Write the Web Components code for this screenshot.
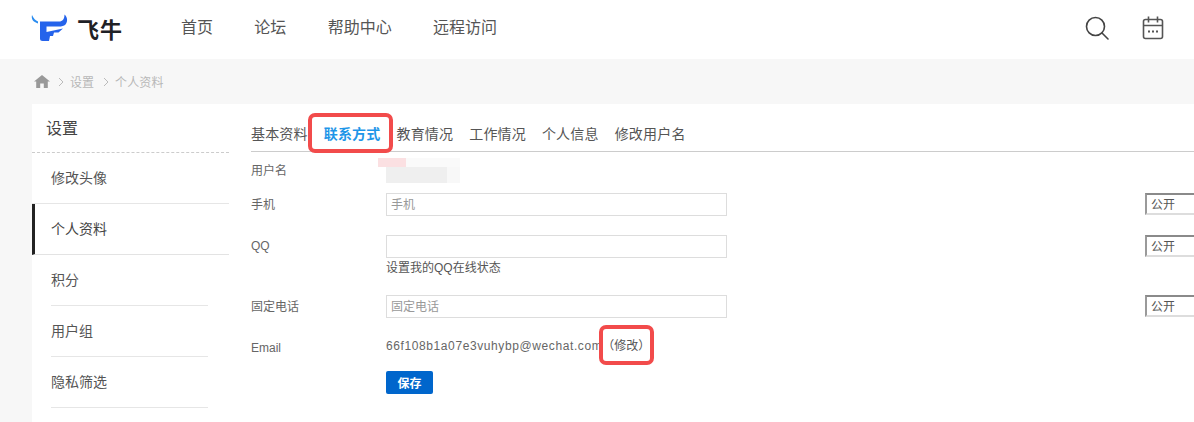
<!DOCTYPE html>
<html lang="zh-CN">
<head>
<meta charset="utf-8">
<title>个人资料</title>
<style>
  html, body { margin: 0; height: 422px; overflow: hidden; background: #f7f7f7; }
  body { font-family: "Liberation Sans", "Noto Sans CJK SC", sans-serif; color: #666; }
</style>
</head>
<body>
<site-header></site-header>
<bread-crumb></bread-crumb>
<settings-page>
  <side-nav slot="side"></side-nav>
  <contact-form></contact-form>
</settings-page>

<script>
function shadow(el, html) {
  el.attachShadow({ mode: 'open' }).innerHTML = html;
}

class SiteHeader extends HTMLElement {
  connectedCallback() {
    shadow(this, `
      <style>
        :host { display: flex; align-items: center; height: 59px; background: #fff; padding-left: 30px; padding-right: 30px; }
        .logo { display: flex; align-items: center; width: 151px; }
        .logo svg { margin-top: -3px; }
        .logo span { margin-left: 7px; font-size: 22px; font-weight: 700; color: #1f2126; letter-spacing: 1px; line-height: 59px; position: relative; top: 1px; }
        nav { display: flex; gap: 41.3px; font-size: 16px; color: #555; position: relative; top: -4px; }
        .tools { margin-left: auto; display: flex; gap: 33px; align-items: center; position: relative; top: -2px; }
        svg { display: block; }
      </style>
      <div class="logo">
        <svg width="40" height="32" viewBox="30 12 40 32">
          <path d="M32 15C31 19 33 22 38 23.500L38 21.500C35.500 20.500 33.500 18.500 32 15Z" fill="#2a8cf0"/>
          <path d="M40 21.500H59C62.500 21.500 64.500 19 64.500 14.500C67.500 17 68 21.500 65.500 24.500C64 26 61.500 26.500 59 26.500H46.500V32L63 28.500L58.500 32.500H54L53 36H50L49 41H42.500Q40 41 40 38.500Z" fill="#2563eb"/>
        </svg>
        <span>飞牛</span>
      </div>
      <nav><span>首页</span><span>论坛</span><span>帮助中心</span><span>远程访问</span></nav>
      <div class="tools">
        <svg width="24" height="24" viewBox="0 0 24 24" fill="none" stroke="#444" stroke-width="1.600">
          <circle cx="10.500" cy="10.500" r="9"/><path d="M17 17l6 6" stroke-linecap="round"/>
        </svg>
        <svg width="22" height="24" viewBox="0 0 22 24" fill="none" stroke="#555" stroke-width="1.600">
          <rect x="1.500" y="3.500" width="19" height="19" rx="2"/>
          <path d="M1.500 9.500h19M6.500 .5v6M15.500 .5v6"/>
          <path d="M6 15.500h2M10 15.500h2M14 15.500h2" stroke-width="1.800"/>
        </svg>
      </div>
    `);
  }
}

class BreadCrumb extends HTMLElement {
  connectedCallback() {
    const chevron = '<svg width="6" height="10" viewBox="0 0 6 10" fill="none" stroke="#bbb" stroke-width="1"><path d="M1 1l4 4-4 4"/></svg>';
    shadow(this, `
      <style>
        :host { display: flex; align-items: center; height: 45px; padding-left: 34px; font-size: 12px; color: #b8b8b8; }
        svg { display: block; }
        .home { margin-right: 7px; }
        .chev { display: flex; }
        .last { letter-spacing: .15px; }
      </style>
      <svg class="home" width="16" height="13" viewBox="0 0 16 13" fill="#999"><path d="M8 0L0 6.500h2.200V13h4V8.500h3.600V13h4V6.500H16z"/></svg>
      <span class="chev" style="margin:0 6px 0 1px">${chevron}</span><span>设置</span><span class="chev" style="margin:0 6px 0 9px">${chevron}</span><span class="last">个人资料</span>
    `);
  }
}

class SettingsPage extends HTMLElement {
  connectedCallback() {
    shadow(this, `
      <style>
        :host { display: flex; margin-left: 32px; background: #fff; height: 318px; overflow: hidden; }
        ::slotted([slot=side]) { flex: none; }
        .main { flex: 1; min-width: 0; padding-left: 22px; }
      </style>
      <slot name="side"></slot>
      <div class="main"><slot></slot></div>
    `);
  }
}

class SideNav extends HTMLElement {
  connectedCallback() {
    const items = ['修改头像', '个人资料', '积分', '用户组', '隐私筛选'];
    shadow(this, `
      <style>
        :host { display: block; width: 197px; }
        h2 { margin: 0; height: 48px; line-height: 49px; padding-left: 14px; font-size: 16px; font-weight: 400; color: #444; border-bottom: 1px dashed #ccc; }
        ul { margin: 0; padding: 0; list-style: none; font-size: 14px; color: #555; }
        li { height: 50px; line-height: 50px; margin-left: 19px; margin-right: 21px; border-bottom: 1px solid #e6e6e6; }
        li.wide { margin: 0; padding-left: 19px; }
        li.on { padding-left: 16px; border-left: 3px solid #222; color: #444; border-bottom-color: #e3e3e3; }
      </style>
      <h2>设置</h2>
      <ul>
        ${items.map((t, i) => `<li class="${i < 2 ? 'wide' : ''} ${i === 1 ? 'on' : ''}">${t}</li>`).join('')}
      </ul>
    `);
  }
}

class TabBar extends HTMLElement {
  connectedCallback() {
    const tabs = ['基本资料', '联系方式', '教育情况', '工作情况', '个人信息', '修改用户名'];
    shadow(this, `
      <style>
        :host { display: flex; gap: 16px; height: 47px; line-height: 60px; font-size: 14px; letter-spacing: .18px; color: #555; border-bottom: 1px solid #ccc; }
        .on { color: #1e96e8; font-weight: 700; }
      </style>
      ${tabs.map((t, i) => `<span class="${i === 1 ? 'on' : ''}">${t}</span>`).join('')}
    `);
  }
}

class FormRow extends HTMLElement {
  connectedCallback() {
    const label = this.getAttribute('label');
    const select = this.hasAttribute('privacy');
    shadow(this, `
      <style>
        :host { display: grid; grid-template-columns: 135px 1fr 49px; font-size: 12px; color: #666; }
        .label { padding-top: var(--label-top, 2px); }
        .select { box-sizing: border-box; width: 100px; height: 22px; line-height: 20px; padding-left: 4px; color: #555; background: #fff;
          border-top: 2px solid #8a8a8a; border-left: 2px solid #9a9a9a; border-bottom: 2px solid #ddd; }
      </style>
      <div class="label">${label}</div>
      <div><slot></slot></div>
      ${select ? '<div class="select">公开</div>' : ''}
    `);
  }
}

class TextField extends HTMLElement {
  connectedCallback() {
    shadow(this, `
      <style>
        :host { display: block; box-sizing: border-box; width: 341px; height: 23px; line-height: 23px; padding-left: 4px; font-size: 12px; color: #999; background: #fff; border: 1px solid #ddd; }
      </style>
      <slot></slot>
    `);
  }
}

class RedFrame extends HTMLElement {
  connectedCallback() {
    shadow(this, `
      <style>
        :host { display: block; position: absolute; box-sizing: border-box; border: 4px solid #f24b4b; border-radius: 7px; pointer-events: none; }
      </style>
    `);
  }
}

class ContactForm extends HTMLElement {
  connectedCallback() {
    shadow(this, `
      <style>
        :host { display: block; position: relative; font-size: 12px; color: #666; }
        .mask { position: absolute; top: 54px; left: 127px; width: 82px; height: 25px; }
        .mask i { position: absolute; display: block; }
        .rows { display: flex; flex-direction: column; }
        .hint { margin-top: 2px; color: #555; line-height: 16px; }
        .value { display: block; margin-top: -3px; white-space: nowrap; }
        .email { letter-spacing: .6px; color: #666; }
        .change { color: #555; }
        button { margin: 0 0 0 135px; width: 47px; height: 23px; padding: 0; border: 0; border-radius: 2px; background: #0066cc; color: #fff; font: 700 12px "Liberation Sans", "Noto Sans CJK SC", sans-serif; }
      </style>
      <tab-bar></tab-bar>
      <div class="mask">
        <i style="left:0;top:0;width:28px;height:9px;background:#fbe0e2"></i>
        <i style="left:28px;top:0;width:54px;height:9px;background:#fafafa"></i>
        <i style="left:8px;top:9px;width:61px;height:16px;background:#efefef"></i>
        <i style="left:69px;top:9px;width:13px;height:16px;background:#f8f8f8"></i>
      </div>
      <div class="rows">
        <form-row label="用户名" style="height:41px;--label-top:9px"></form-row>
        <form-row label="手机" privacy style="height:42px"><text-field>手机</text-field></form-row>
        <form-row label="QQ" privacy style="height:60px;--label-top:4px">
          <text-field></text-field>
          <div class="hint">设置我的QQ在线状态</div>
        </form-row>
        <form-row label="固定电话" privacy style="height:44px"><text-field>固定电话</text-field></form-row>
        <form-row label="Email" style="height:32px;--label-top:2px"><span class="value"><span class="email">66f108b1a07e3vuhybp@wechat.com</span><span class="change">（修改）</span></span></form-row>
        <div><button>保存</button></div>
      </div>
      <red-frame style="left:348px;top:221px;width:55px;height:40px"></red-frame>
      <red-frame style="left:57px;top:9px;width:85px;height:40px"></red-frame>
    `);
  }
}

customElements.define('site-header', SiteHeader);
customElements.define('bread-crumb', BreadCrumb);
customElements.define('settings-page', SettingsPage);
customElements.define('side-nav', SideNav);
customElements.define('tab-bar', TabBar);
customElements.define('form-row', FormRow);
customElements.define('text-field', TextField);
customElements.define('red-frame', RedFrame);
customElements.define('contact-form', ContactForm);
</script>
</body>
</html>
